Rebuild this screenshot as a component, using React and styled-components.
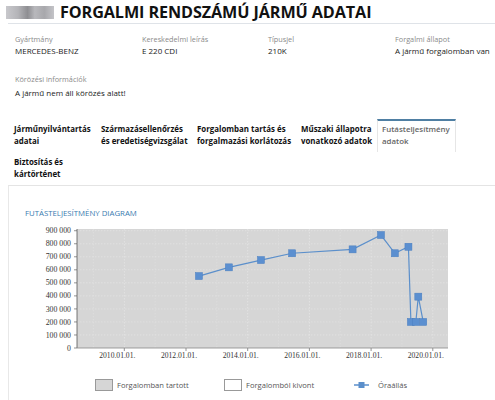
import React from 'react';
import styled, { createGlobalStyle } from 'styled-components';

const GlobalStyle = createGlobalStyle`
  body {
    margin: 0;
    font-family: "Open Sans", "Noto Sans", sans-serif;
    color: #222;
    background: #fff;
  }
`;

const fields = [
  { label: 'Gyártmány', value: 'MERCEDES-BENZ' },
  { label: 'Kereskedelmi leírás', value: 'E 220 CDI' },
  { label: 'Típusjel', value: '210K' },
  { label: 'Forgalmi állapot', value: 'A jármű forgalomban van' },
];

const tabs = [
  { label: 'Járműnyilvántartás adatai', width: 87 },
  { label: 'Származásellenőrzés és eredetiségvizsgálat', width: 96 },
  { label: 'Forgalomban tartás és forgalmazási korlátozás', width: 104 },
  { label: 'Műszaki állapotra vonatkozó adatok', width: 82 },
  { label: 'Futásteljesítmény adatok', width: 79, active: true },
  { label: 'Biztosítás és kártörténet', width: 87 },
];

// readings: year (fractional), km
const readings = [
  [2012.42, 552000],
  [2013.39, 619000],
  [2014.43, 675000],
  [2015.44, 727000],
  [2017.4, 757000],
  [2018.32, 867000],
  [2018.77, 727000],
  [2019.21, 777000],
  [2019.29, 200000],
  [2019.45, 200000],
  [2019.53, 394000],
  [2019.69, 200000],
];

const PLOT = { left: 77, right: 448, top: 229, bottom: 348 };
const xOf = (yr) => 124.3 + (yr - 2010) * 30.85;
const yOf = (v) => 348 - (v / 100000) * 13.03;

const Page = () => (
  <>
    <GlobalStyle />
    <Header>
      <Plate />
      <Title>FORGALMI RENDSZÁMÚ JÁRMŰ ADATAI</Title>
    </Header>
    <FieldGrid>
      {fields.map((f) => (
        <Field key={f.label}>
          <Label>{f.label}</Label>
          <Value>{f.value}</Value>
        </Field>
      ))}
    </FieldGrid>
    <Wanted>
      <Label>Körözési információk</Label>
      <Value $big>A jármű nem áll körözés alatt!</Value>
    </Wanted>
    <Tabs>
      {tabs.map((t) => (
        <Tab key={t.label} $width={t.width} $active={t.active}>
          {t.label}
        </Tab>
      ))}
    </Tabs>
    <Panel>
      <PanelTitle>FUTÁSTELJESÍTMÉNY DIAGRAM</PanelTitle>
      <Chart />
      <Legend>
        <LegendItem $width={129}>
          <Swatch $fill="#d6d6d6" />
          Forgalomban tartott
        </LegendItem>
        <LegendItem $width={130}>
          <Swatch $fill="#fff" />
          Forgalomból kivont
        </LegendItem>
        <LegendItem>
          <svg width="15" height="8" viewBox="0 0 15 8" style={{ marginRight: 9 }}>
            <line x1="0" y1="4" x2="15" y2="4" stroke="#5b8fcb" strokeWidth="1.5" />
            <rect x="4.5" y="1" width="6" height="6" fill="#5b8fcb" />
          </svg>
          Óraállás
        </LegendItem>
      </Legend>
    </Panel>
  </>
);

const Chart = () => {
  const yTicks = [0, 1, 2, 3, 4, 5, 6, 7, 8, 9];
  const years = [2010, 2012, 2014, 2016, 2018, 2020];
  const minorYears = [2009, 2011, 2013, 2015, 2017, 2019];
  const pts = readings.map(([yr, v]) => [xOf(yr), yOf(v)]);
  return (
    <ChartSvg viewBox="9 222 486 140" width="486" height="140">
      <rect
        x={PLOT.left}
        y={PLOT.top}
        width={PLOT.right - PLOT.left}
        height={PLOT.bottom - PLOT.top}
        fill="#d6d6d6"
      />
      {yTicks.map((i) => {
        const y = yOf(i * 100000);
        return (
          <g key={i}>
            {i > 0 && (
              <line x1={PLOT.left} x2={PLOT.right} y1={y} y2={y} stroke="#e8e8e8" strokeWidth="0.6" strokeDasharray="1.5 1.5" />
            )}
            <line x1={PLOT.left - 3} x2={PLOT.left} y1={y} y2={y} stroke="#666" strokeWidth="0.7" />
            <text x={PLOT.left - 6} y={y + 2.6} textAnchor="end" fontSize="7.8" fontFamily="'Liberation Serif', serif" fill="#333">
              {i === 0 ? '0' : `${i}00 000`}
            </text>
          </g>
        );
      })}
      {minorYears.map((yr) => (
        <line key={yr} x1={xOf(yr)} x2={xOf(yr)} y1={PLOT.top} y2={PLOT.bottom} stroke="#e2e2e2" strokeWidth="0.5" strokeDasharray="1.5 1.5" />
      ))}
      {years.map((yr) => (
        <g key={yr}>
          <line x1={xOf(yr)} x2={xOf(yr)} y1={PLOT.top} y2={PLOT.bottom} stroke="#e8e8e8" strokeWidth="0.7" strokeDasharray="1.5 1.5" />
          <line x1={xOf(yr)} x2={xOf(yr)} y1={PLOT.bottom} y2={PLOT.bottom + 3} stroke="#666" strokeWidth="0.7" />
          <text x={xOf(yr) - 7} y={357.5} textAnchor="middle" fontSize="7.6" fontFamily="'Liberation Serif', serif" fill="#333">
            {`${yr}.01.01.`}
          </text>
        </g>
      ))}
      <line x1={PLOT.left} x2={PLOT.left} y1={PLOT.top} y2={PLOT.bottom} stroke="#555" strokeWidth="0.8" />
      <line x1={PLOT.left} x2={PLOT.right} y1={PLOT.bottom} y2={PLOT.bottom} stroke="#888" strokeWidth="0.8" />
      <polyline points={pts.map((p) => p.join(',')).join(' ')} fill="none" stroke="#5b8fcb" strokeWidth="1.2" />
      {pts.map(([x, y], i) => (
        <rect key={i} x={x - 3.5} y={y - 3.5} width="7" height="7" fill="#5b8fd0" stroke="#4a7fc0" strokeWidth="0.5" />
      ))}
    </ChartSvg>
  );
};

const Header = styled.header`
  display: flex;
  align-items: center;
  gap: 6px;
  height: 23px;
  margin-left: 8px;
  border-bottom: 1px solid #dfe3e8;
`;

const Plate = styled.div`
  width: 48px;
  height: 13px;
  margin: 2px 0 0 -2px;
  background: linear-gradient(
    90deg,
    #c8c8cc 0%,
    #b4b4b8 25%,
    #8e8e92 45%,
    #b8b8bc 60%,
    #a8a8ac 80%,
    #c4c4c8 100%
  );
  filter: blur(0.6px);
`;

const Title = styled.h1`
  margin: 1px 0 0;
  font-size: 16.2px;
  font-weight: 700;
  letter-spacing: -0.1px;
  color: #111;
`;

const FieldGrid = styled.div`
  display: grid;
  grid-template-columns: 127px 126px 127px 1fr;
  padding: 10px 0 0 15px;
`;

const Field = styled.div`
  display: flex;
  flex-direction: column;
`;

const Label = styled.div`
  font-size: 7.3px;
  line-height: 11px;
  color: #8a8a8a;
`;

const Value = styled.div`
  font-size: 8px;
  line-height: ${(p) => (p.$big ? '15px' : '12px')};
  color: #1a1a1a;
`;

const Wanted = styled.div`
  padding: 17px 0 0 15px;
`;

const Tabs = styled.nav`
  display: flex;
  flex-wrap: wrap;
  padding: 19px 0 0 8px;
`;

const Tab = styled.div`
  box-sizing: border-box;
  width: ${(p) => p.$width}px;
  height: 33px;
  padding: ${(p) => (p.$active ? '2px 0 0 4px' : '2px 0 0 5px')};
  font-size: 7.9px;
  line-height: 12px;
  font-weight: ${(p) => (p.$active ? 600 : 700)};
  color: ${(p) => (p.$active ? '#666' : '#111')};
  border-top: 2px solid ${(p) => (p.$active ? '#4f7fa3' : 'transparent')};
  border-left: 1px solid ${(p) => (p.$active ? '#e6e6e6' : 'transparent')};
  border-right: 1px solid ${(p) => (p.$active ? '#e6e6e6' : 'transparent')};
`;

const Panel = styled.section`
  margin-left: 8px;
  border-top: 1px solid #e4e4e4;
  border-left: 1px solid #e8e8e8;
  padding-top: 21px;
  min-height: 200px;
`;

const PanelTitle = styled.h2`
  margin: 0 0 0 16px;
  font-size: 7.8px;
  line-height: 12px;
  font-weight: 500;
  color: #3b7bb0;
`;

const ChartSvg = styled.svg`
  display: block;
  margin-top: 3px;
`;

const Legend = styled.div`
  display: flex;
  align-items: center;
  padding: 17px 0 0 86px;
  font-size: 7.6px;
  color: #555;
`;

const LegendItem = styled.div`
  display: flex;
  align-items: center;
  width: ${(p) => (p.$width ? `${p.$width}px` : 'auto')};
`;

const Swatch = styled.span`
  display: inline-block;
  width: 16px;
  height: 10px;
  margin-right: 4px;
  background: ${(p) => p.$fill};
  border: 1px solid #999;
`;

export default Page;
